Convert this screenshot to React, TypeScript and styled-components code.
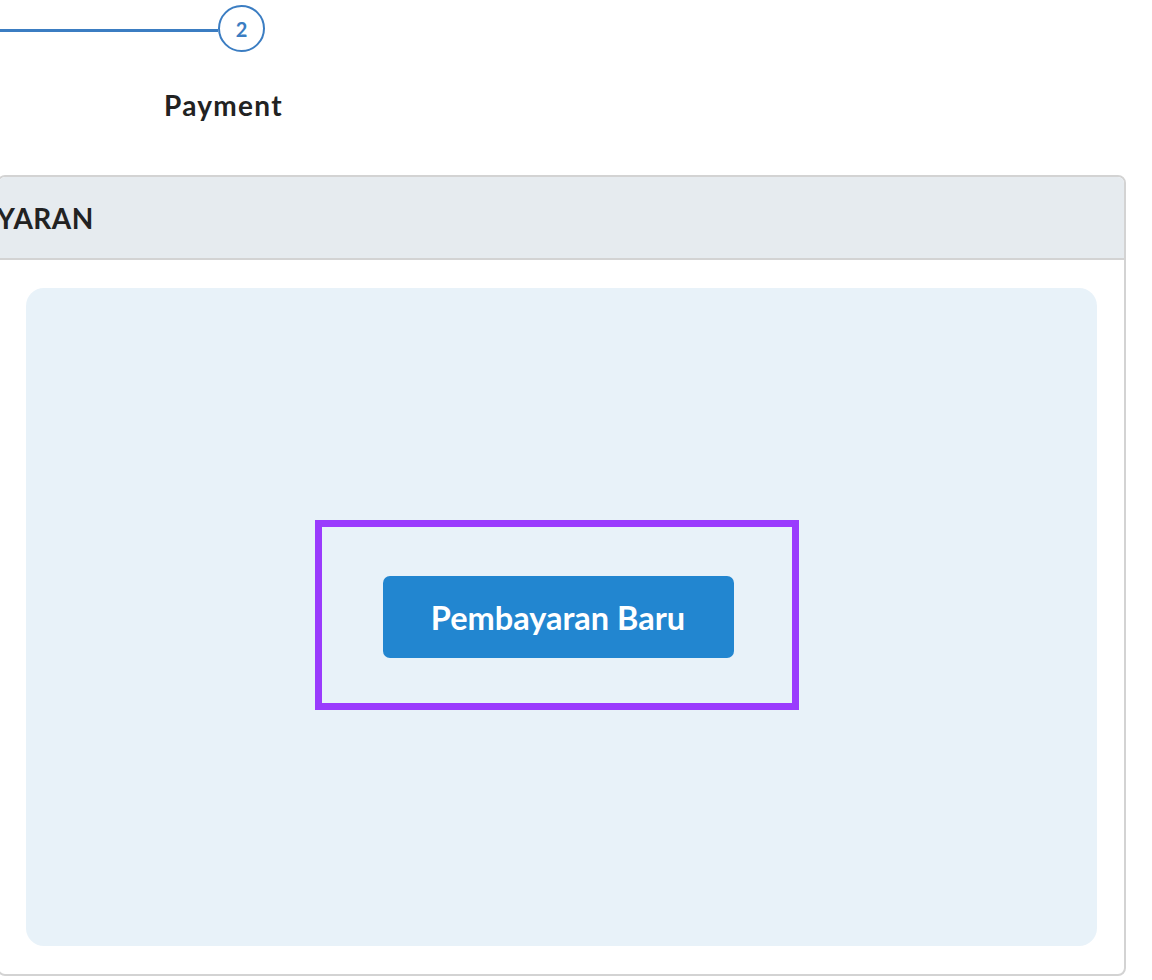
import { createGlobalStyle, styled } from "styled-components";

const GlobalStyle = createGlobalStyle`
    html, body {
        margin: 0;
        padding: 0;
        background: #ffffff;
        font-family: Lato, "Open Sans", sans-serif;
        color: #222222;
        overflow: hidden;
    }
`;

const Page = styled.div`
    width: 1152px;
    height: 980px;
    padding-top: 5px;
    box-sizing: border-box;
`;

const Stepper = styled.div`
    display: flex;
    flex-direction: column;
`;

const StepTrack = styled.div`
    display: flex;
    flex-direction: row;
    align-items: center;
`;

const StepLine = styled.div<{ width: number }>`
    width: ${props => props.width}px;
    height: 3px;
    background-color: #3b7dc2;
    margin-top: 3px;
`;

const StepCircle = styled.div`
    width: 47px;
    height: 47px;
    box-sizing: border-box;
    border: 2px solid #3b7dc2;
    border-radius: 50%;
    display: flex;
    align-items: center;
    justify-content: center;
    color: #3b7dc2;
    font-weight: 700;
    font-size: 20px;
`;

const StepLabel = styled.div<{ offset: number }>`
    padding-left: ${props => props.offset}px;
    margin-top: 36px;
    font-size: 28px;
    font-weight: 700;
    line-height: 34px;
    letter-spacing: 1.3px;
    color: #222222;
`;

const Card = styled.div`
    margin-top: 53px;
    margin-left: -3px;
    width: 1129px;
    border: 2px solid #d3d3d3;
    border-radius: 8px;
    box-sizing: border-box;
    overflow: hidden;
`;

const CardHeader = styled.div`
    height: 81px;
    background-color: #e6ebef;
    border-bottom: 2px solid #d3d3d3;
    display: flex;
    align-items: center;
    padding-left: 20px;
`;

const CardTitle = styled.h3`
    margin: 0 0 0 -120px;
    font-size: 28px;
    font-weight: 700;
    color: #222222;
    letter-spacing: 0.5px;
`;

const CardBody = styled.div`
    padding: 28px 27px 28px 27px;
`;

const EmptyPanel = styled.div`
    height: 658px;
    background-color: #e8f2f9;
    border-radius: 18px;
    display: flex;
    align-items: center;
    justify-content: center;
`;

const Highlight = styled.div`
    border: 7px solid #9a3bfd;
    padding: 49px 58px 45px 61px;
    margin: -4px 0 0 -10px;
`;

const PrimaryButton = styled.button`
    width: 351px;
    height: 82px;
    border: none;
    border-radius: 7px;
    background-color: #2286d0;
    color: #ffffff;
    font-family: Lato, "Open Sans", sans-serif;
    font-weight: 700;
    font-size: 32.5px;
    cursor: pointer;
`;

const App = () => {
    return <>
        <GlobalStyle />
        <Page>
            <Stepper>
                <StepTrack>
                    <StepLine width={218} />
                    <StepCircle>2</StepCircle>
                </StepTrack>
                <StepLabel offset={164}>Payment</StepLabel>
            </Stepper>
            <Card>
                <CardHeader>
                    <CardTitle>PEMBAYARAN</CardTitle>
                </CardHeader>
                <CardBody>
                    <EmptyPanel>
                        <Highlight>
                            <PrimaryButton>Pembayaran Baru</PrimaryButton>
                        </Highlight>
                    </EmptyPanel>
                </CardBody>
            </Card>
        </Page>
    </>
}

export default App;
